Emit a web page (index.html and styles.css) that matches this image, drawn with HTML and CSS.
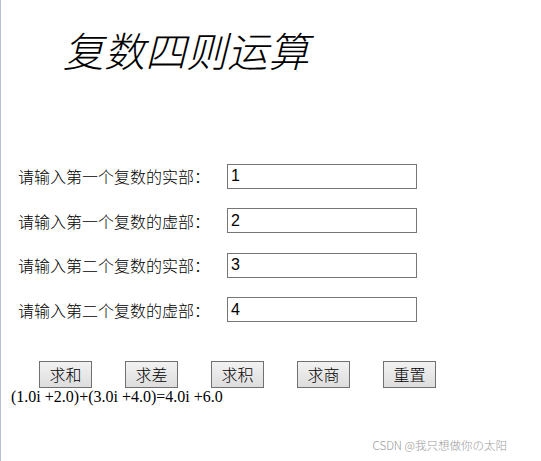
FILE: index.html
```html
<html>
    <head>
        <title>复数四则运算</title>
        <link rel="stylesheet" href="styles.css">
    </head>
    <body>
        <div class="page">
            <h1 class="title">复数四则运算</h1>
            <div class="form">
                <div class="row"><span class="label">请输入第一个复数的实部：</span><input class="num" type="text" value="1"></div>
                <div class="row"><span class="label">请输入第一个复数的虚部：</span><input class="num" type="text" value="2"></div>
                <div class="row"><span class="label">请输入第二个复数的实部：</span><input class="num" type="text" value="3"></div>
                <div class="row"><span class="label">请输入第二个复数的虚部：</span><input class="num" type="text" value="4"></div>
            </div>
            <div class="gr-btn">
                <button class="btn">求和</button>
                <button class="btn">求差</button>
                <button class="btn">求积</button>
                <button class="btn">求商</button>
                <button class="btn">重置</button>
            </div>
            <p class="result">(1.0i +2.0)+(3.0i +4.0)=4.0i +6.0</p>
            <div class="mark">CSDN @我只想做你の太阳</div>
        </div>
    </body>
</html>
```

FILE: styles.css
```css
body {
    margin: 0;
    background: #fff;
    font-family: "Noto Sans CJK SC", sans-serif;
}

.page {
    position: relative;
    height: 461px;
    border-left: 1px solid #b9bfd9;
    box-sizing: border-box;
}

.title {
    margin: 0;
    padding: 29px 0 0 62px;
    font-size: 41px;
    line-height: 41px;
    font-style: italic;
    font-weight: 300;
    color: #000;
}

.form {
    margin-top: 94px;
    display: flex;
    flex-direction: column;
    gap: 20px;
}

.row {
    display: flex;
    align-items: center;
    height: 24.5px;
}

.label {
    width: 209px;
    padding-left: 17px;
    font-size: 16px;
    font-weight: 300;
    color: #000;
}

.num {
    width: 190px;
    height: 25px;
    border: 1px solid #767676;
    padding: 0 3px;
    font-family: "Liberation Sans", Arial, sans-serif;
    font-size: 16px;
    color: #000;
    box-sizing: border-box;
    outline: none;
}

.gr-btn {
    margin-top: 39px;
    padding-left: 38px;
    display: flex;
    gap: 33px;
}

.btn {
    width: 53px;
    height: 27px;
    padding: 0;
    border: 1px solid #707070;
    background: linear-gradient(#f2f2f2, #dddddd);
    font-family: "Noto Sans CJK SC", sans-serif;
    font-size: 16px;
    font-weight: 300;
    line-height: 25px;
    color: #000;
}

.result {
    margin: 0;
    padding-left: 10px;
    font-family: "Liberation Serif", "Times New Roman", serif;
    font-size: 16px;
    line-height: 18px;
    color: #000;
}

.mark {
    position: absolute;
    right: 34px;
    top: 437px;
    font-size: 11.5px;
    font-weight: 300;
    color: #9a9a9a;
}
```
